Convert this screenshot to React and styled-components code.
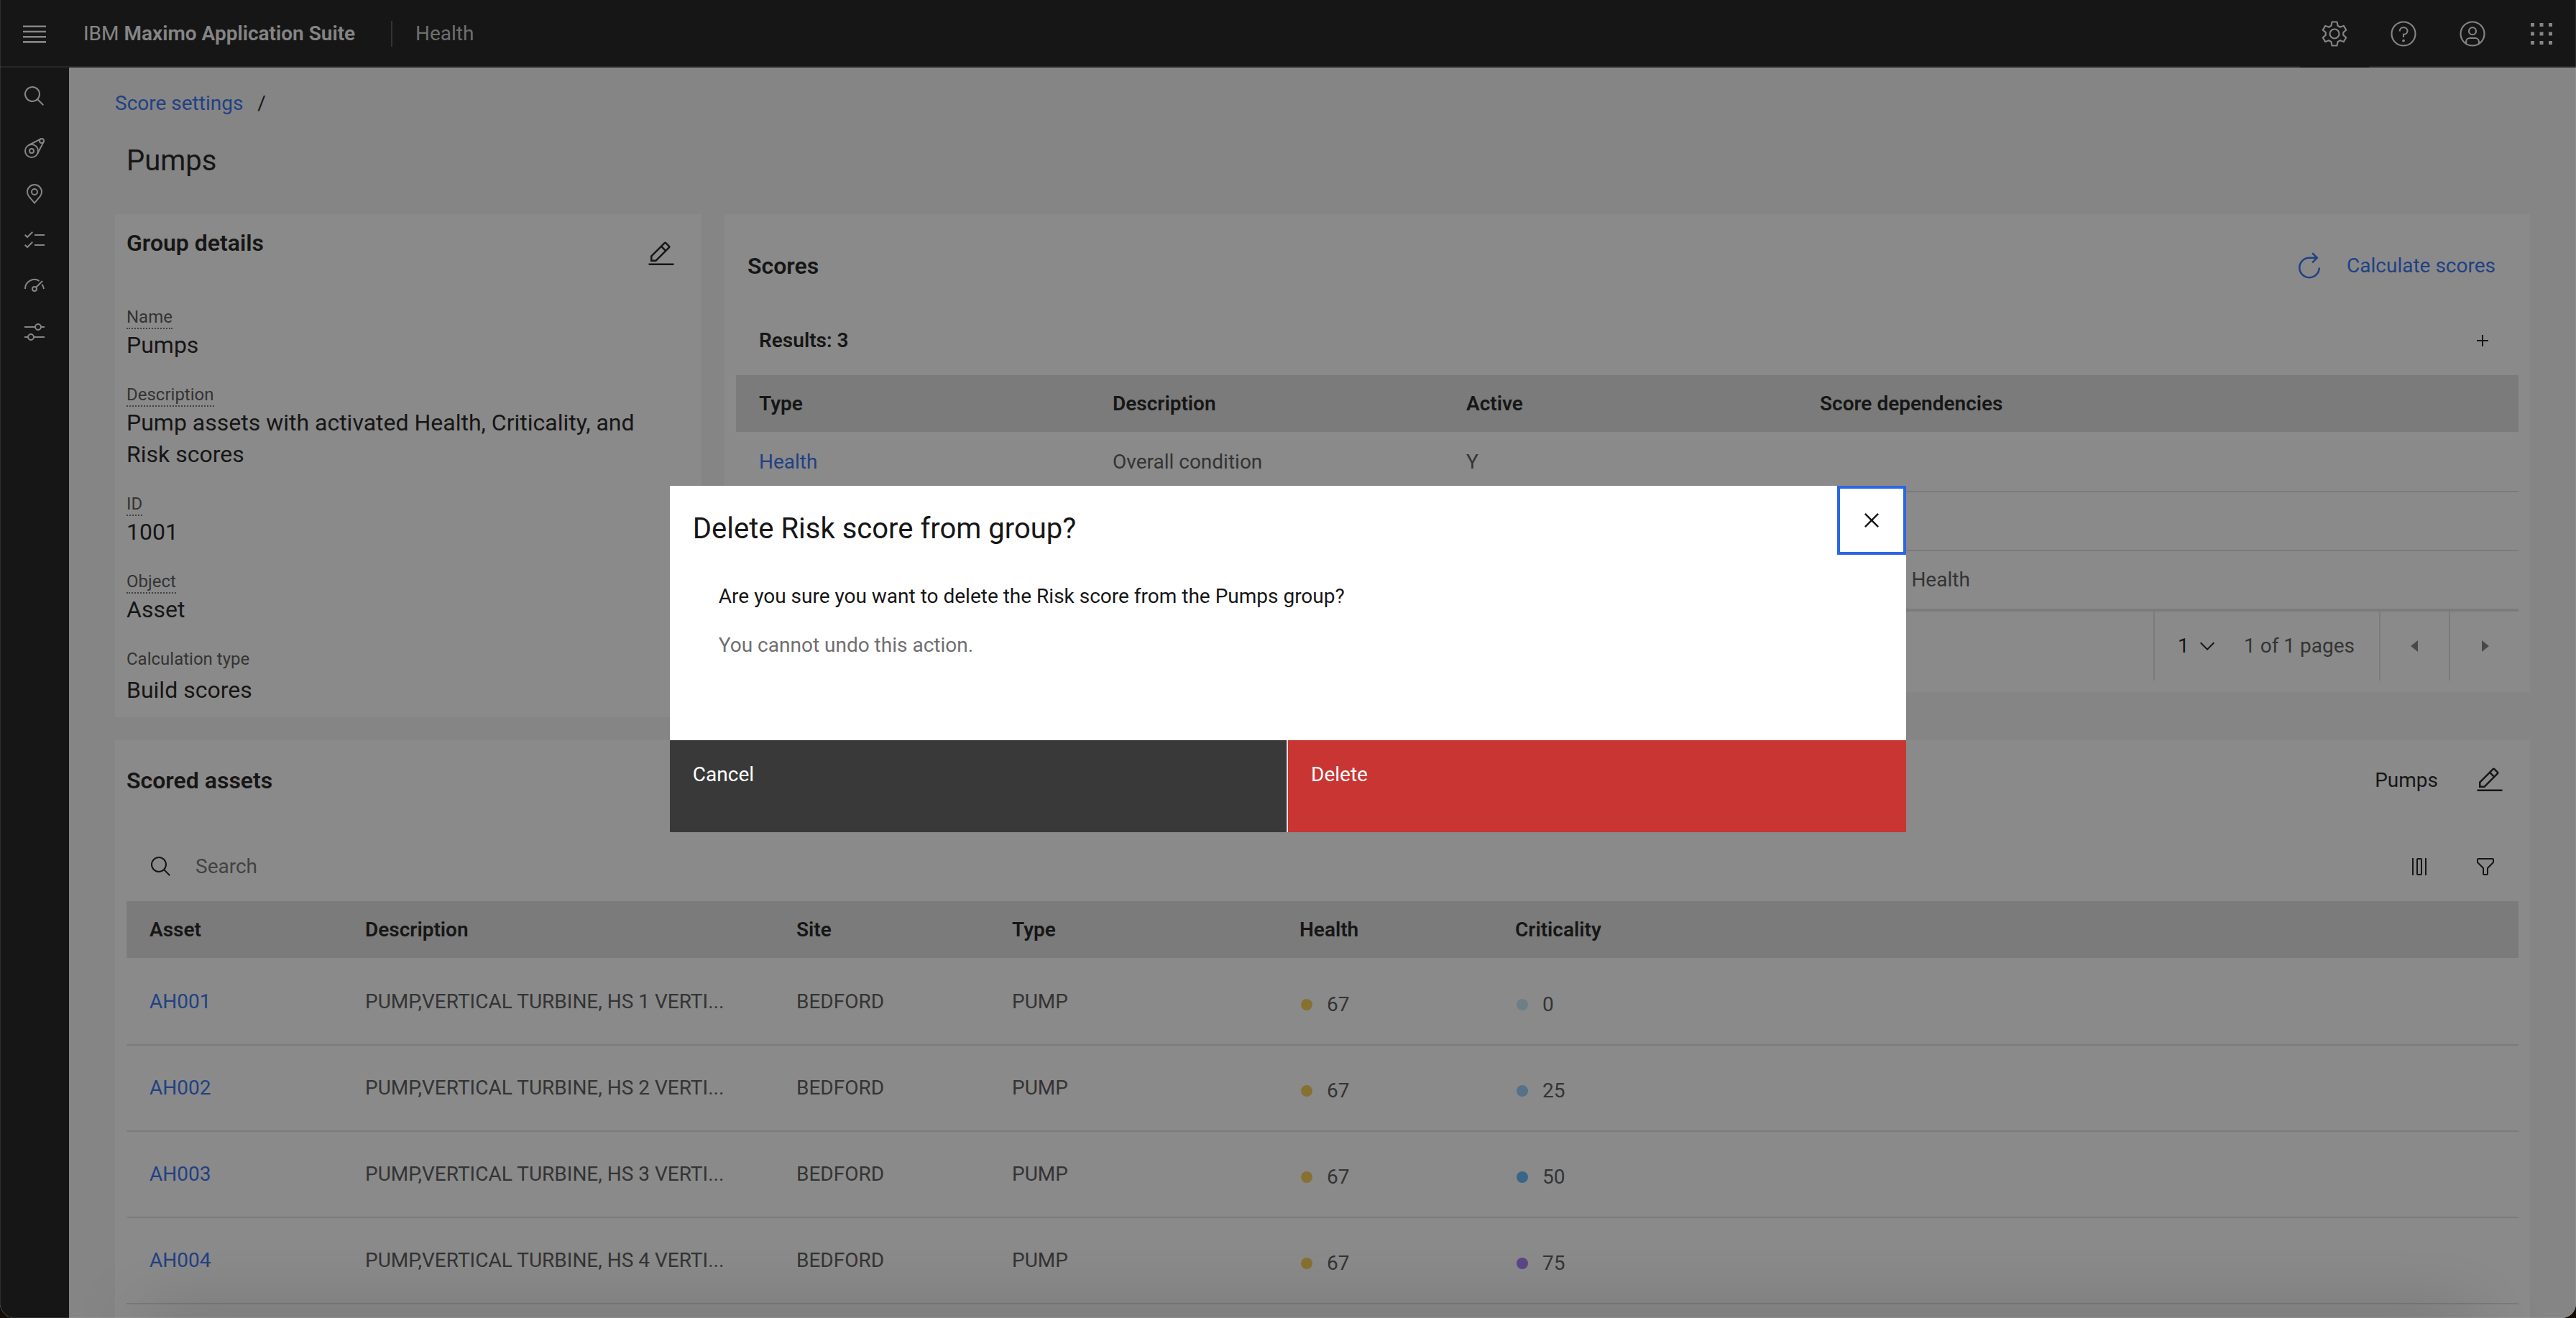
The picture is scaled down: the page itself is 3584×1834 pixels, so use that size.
import React from "react";
import styled, { createGlobalStyle, css } from "styled-components";

const color = {
  ink: "#161616",
  text: "#525252",
  muted: "#6f6f6f",
  link: "#2d6cf0",
  line: "#e0e0e0",
  page: "#f4f4f4",
  card: "#ffffff",
  focus: "#2d66e2",
  danger: "#c83532",
};

const GlobalStyle = createGlobalStyle`
  *, *::before, *::after { box-sizing: border-box; }
  body {
    margin: 0;
    background: #140c06;
    color: ${color.ink};
    font: 400 28px/40px Roboto, "Liberation Sans", sans-serif;
  }
  button, input, select { font: inherit; color: inherit; }
  h1, h2, p, dl, dd { margin: 0; }
`;

/* ---------- window and shell ---------- */

const Window = styled.div`
  position: relative;
  display: flex;
  flex-direction: column;
  height: 100vh;
  overflow: hidden;
  border-radius: 0 0 20px 20px;
  background: ${color.page};
`;

const WindowEdge = styled.div`
  position: absolute;
  inset: 0;
  z-index: 3;
  pointer-events: none;
  border: solid rgba(255, 255, 255, 0.1);
  border-width: 0 1px 1px;
  border-radius: 0 0 20px 20px;
`;

const BottomShade = styled.div`
  position: absolute;
  right: 140px;
  bottom: -40px;
  left: 200px;
  z-index: 1;
  height: 40px;
  pointer-events: none;
  box-shadow: 0 0 100px rgba(0, 0, 0, 0.3);
`;

const Bare = styled.button`
  display: flex;
  align-items: center;
  justify-content: center;
  flex: none;
  padding: 0;
  border: 0;
  background: none;
  cursor: pointer;
`;

const IconButton = styled(Bare)`
  width: ${(p) => p.$w || 96}px;
  height: ${(p) => p.$h || 96}px;
`;

const Header = styled.header`
  display: flex;
  align-items: center;
  flex: none;
  height: 94px;
  background: ${color.ink};
  color: ${color.page};
  box-shadow: inset 0 -2px #393939;
`;

const Brand = styled.a`
  min-width: 448px;
  padding-left: 20px;
  color: inherit;
  text-decoration: none;

  strong { font-weight: 600; }
`;

const AppName = styled.span`
  flex: 1;
  padding-left: 32px;
  border-left: 2px solid #525252;
  line-height: 36px;
  color: #c6c6c6;
`;

const HeaderAction = styled(Bare)`
  width: 96px;
  height: 94px;
  background: ${(p) => (p.$active ? color.ink : "none")};
`;

const Columns = styled.div`
  display: flex;
  flex: 1;
  min-height: 0;
`;

const SideNav = styled.nav`
  flex: none;
  width: 96px;
  padding-top: 8px;
  background: ${color.ink};
  color: ${color.page};
`;

const NavItem = styled.a`
  display: flex;
  align-items: center;
  justify-content: center;
  height: 64px;
  color: inherit;

  &:first-child { margin-bottom: 8px; }
`;

const Main = styled.main`
  flex: 1;
  min-width: 0;
  padding: 30px 64px 0;
  overflow: hidden;
`;

const Link = styled.a`
  color: ${color.link};
  text-decoration: none;
`;

const Breadcrumb = styled.nav`
  display: flex;
  gap: 20px;
`;

const PageTitle = styled.h1`
  margin: 32px 0 46px;
  padding-left: 16px;
  font-size: 40px;
  font-weight: 400;
  line-height: 56px;
`;

/* ---------- cards ---------- */

const Cards = styled.div`
  display: grid;
  grid-template-columns: repeat(4, minmax(0, 1fr));
  gap: 32px;
  align-items: start;
`;

const Card = styled.section`
  grid-column: span ${(p) => p.$span};
  min-height: ${(p) => p.$minHeight || 0}px;
  padding: 16px;
  background: ${color.card};
`;

const CardHead = styled.div`
  display: flex;
  align-items: ${(p) => p.$align || "center"};
  gap: 32px;
  height: ${(p) => p.$h || 80}px;
  margin-bottom: ${(p) => p.$gap || 0}px;
`;

const CardTitle = styled.h2`
  flex: 1;
  padding-left: ${(p) => p.$inset || 0}px;
  font-size: 32px;
  font-weight: 600;
  line-height: 48px;
`;

const Field = styled.div`
  margin-top: 32px;
`;

const Label = styled.dt`
  width: fit-content;
  border-bottom: 2px dotted ${(p) => (p.$plain ? "transparent" : color.muted)};
  margin-bottom: ${(p) => (p.$plain ? 4 : 0)}px;
  color: ${color.text};
  font-size: 24px;
  line-height: 30px;
`;

const Value = styled.dd`
  padding-right: 32px;
  font-size: 32px;
  line-height: 44px;
`;

const TextButton = styled(Bare)`
  gap: 32px;
  padding: 0 32px 0 0;
  height: 96px;
  color: ${color.link};
`;

const Toolbar = styled.div`
  display: flex;
  align-items: center;
  height: 96px;
  padding-left: 32px;
`;

const Results = styled.strong`
  flex: 1;
  font-weight: 600;
`;

const SearchLabel = styled.label`
  display: flex;
  align-items: center;
  flex: 1;
  gap: 32px;
`;

const SearchInput = styled.input`
  flex: 1;
  padding: 0;
  border: 0;
  outline: 0;
  background: none;

  &::placeholder { color: ${color.muted}; opacity: 1; }
`;

/* ---------- tables ---------- */

const Table = styled.table`
  width: 100%;
  table-layout: fixed;
  border-spacing: 0;
  text-align: left;

  th {
    height: 81px;
    padding: 0 32px;
    border-bottom: 2px solid ${color.card};
    background: ${color.line};
    font-weight: 600;
  }

  td {
    height: ${(p) => p.$row}px;
    padding: 0 32px;
    border-bottom: 2px solid ${color.line};
    color: ${color.text};
    white-space: nowrap;
  }
`;

const Col = styled.col`
  width: ${(p) => (p.$w ? `${p.$w}px` : "auto")};
`;

const Score = styled.span`
  display: flex;
  align-items: center;
  gap: 20px;
  padding: 8px 2px 0;
`;

const dotTone = {
  fair: "#f8cd4a",
  c0: "#c6e6f8",
  c25: "#92cefc",
  c50: "#5cb4fa",
  c75: "#a474f8",
};

const Dot = styled.i`
  width: 16px;
  height: 16px;
  border-radius: 50%;
  background: ${(p) => dotTone[p.$tone]};
`;

const Pagination = styled.div`
  display: flex;
  align-items: stretch;
  justify-content: flex-end;
  height: 98px;
  border-top: 2px solid ${color.line};
  color: ${color.text};
`;

const PageSelectWrap = styled.label`
  display: grid;
  align-items: center;
  width: 94px;
  border-left: 2px solid ${color.line};
  color: ${color.ink};

  > * { grid-area: 1 / 1; }
  > svg { justify-self: end; margin-right: 3px; pointer-events: none; }
`;

const PageSelect = styled.select`
  appearance: none;
  width: 100%;
  height: 96px;
  padding: 0 0 0 32px;
  border: 0;
  background: none;
`;

const PageCount = styled.span`
  align-self: center;
  min-width: 156px;
  margin: 0 32px;
`;

const PageStep = styled(Bare)`
  width: 97px;
  border-left: 2px solid ${color.line};
  color: #7d7d7d;
`;

/* ---------- dialog ---------- */

const Backdrop = styled.div`
  position: absolute;
  inset: 0;
  z-index: 2;
  display: flex;
  align-items: center;
  justify-content: center;
  background: rgba(22, 22, 22, 0.5);
`;

const Dialog = styled.div`
  width: 48%;
  background: ${color.card};
`;

const DialogHead = styled.div`
  display: flex;
  justify-content: space-between;
`;

const DialogTitle = styled.h2`
  padding: 32px 0 0 32px;
  font-size: 40px;
  font-weight: 400;
  line-height: 56px;
`;

const CloseButton = styled(IconButton)`
  border: 4px solid ${color.focus};
  outline: 0;
`;

const DialogBody = styled.div`
  padding: 38px 68px 112px;

  p + p { margin-top: 28px; color: ${color.muted}; }
`;

const DialogFooter = styled.div`
  display: grid;
  grid-template-columns: 1fr 1fr;
`;

const DialogButton = styled(Bare)`
  align-items: flex-start;
  justify-content: flex-start;
  height: 128px;
  padding: 28px 32px;
  color: #ffffff;
  ${(p) =>
    p.$danger
      ? css`background: ${color.danger};`
      : css`
          background: #393939;
          border-right: 2px solid ${color.line};
        `}
`;

/* ---------- icons, all on a 32 unit grid ---------- */

const glyphs = {
  menu: <path d="M0 4.5h32v2.6H0zM0 11.7h32v2.6H0zM0 18.9h32v2.6H0zM0 26.1h32v2.6H0z" />,
  search: <path d="M29,27.5859l-7.5521-7.5521a11.0177,11.0177,0,1,0-1.4141,1.4141L27.5859,29ZM4,13a9,9,0,1,1,9,9A9.01,9.01,0,0,1,4,13Z" />,
  pump: (
    <g fill="none" stroke="currentColor" strokeWidth="2">
      <circle cx="12" cy="20" r="9" />
      <circle cx="12" cy="20" r="3" />
      <circle cx="26" cy="6" r="3" />
      <path d="M7.9 12 24.6 3.3M20 24.1 28.7 7.4" />
    </g>
  ),
  pin: (
    <path d="M16,18a5,5,0,1,1,5-5A5.0057,5.0057,0,0,1,16,18Zm0-8a3,3,0,1,0,3,3A3.0033,3.0033,0,0,0,16,10ZM16,30,7.5645,20.0513c-.0479-.0571-.3482-.4515-.3482-.4515A10.8888,10.8888,0,0,1,5,13a11,11,0,0,1,22,0,10.8844,10.8844,0,0,1-2.2148,6.5973l-.0015.0025s-.3.3944-.3447.4474ZM8.8125,18.395c.001.0007.2334.3082.2866.3744L16,26.9079l6.91-8.15c.0439-.0552.2783-.3649.2788-.3657A8.901,8.901,0,0,0,25,13,9,9,0,1,0,7,13,8.9054,8.9054,0,0,0,8.8125,18.395Z" />
  ),
  tasks: <path d="M16 8h14v2H16zM16 22h14v2H16zM6 10.59 3.41 8 2 9.41l4 4 8-8L12.59 4zM6 24.59 3.41 22 2 23.41l4 4 8-8L12.59 18z" />,
  meter: (
    <g fill="none" stroke="currentColor" strokeWidth="2">
      <path d="M3 20a13 13 0 0 1 19.6-11.2M26.3 13.6A13 13 0 0 1 29 20M18.2 17.8 27 9" />
      <circle cx="16" cy="20" r="3" />
    </g>
  ),
  adjust: (
    <path d="M30,8h-4.1c-0.5-2.3-2.5-4-4.9-4s-4.4,1.7-4.9,4H2v2h14.1c0.5,2.3,2.5,4,4.9,4s4.4-1.7,4.9-4H30V8z M21,12c-1.7,0-3-1.3-3-3s1.3-3,3-3s3,1.3,3,3S22.7,12,21,12z M2,24h4.1c0.5,2.3,2.5,4,4.9,4s4.4-1.7,4.9-4H30v-2H15.9c-0.5-2.3-2.5-4-4.9-4s-4.4,1.7-4.9,4H2V24z M11,20c1.7,0,3,1.3,3,3s-1.3,3-3,3s-3-1.3-3-3S9.3,20,11,20z" />
  ),
  gear: (
    <g fill="none" stroke="currentColor" strokeWidth="1.7" strokeLinejoin="round">
      <path d="M13.2 2.8h5.6l.8 4.2 2.7 1.6 3.9-1.5 2.8 4.7-3.2 2.7v3l3.2 2.7-2.8 4.7-3.9-1.5-2.7 1.6-.8 4.2h-5.6l-.8-4.2-2.7-1.6-3.9 1.5L3 20.2l3.2-2.7v-3L3 11.8l2.8-4.7 3.9 1.5 2.7-1.6z" />
      <circle cx="16" cy="16" r="5.2" />
    </g>
  ),
  help: (
    <g fill="none" stroke="currentColor" strokeWidth="1.7">
      <circle cx="16" cy="16" r="13.2" />
      <path d="M11.8 13.2v-.4a3.8 3.8 0 0 1 3.8-3.8h1a3.8 3.8 0 0 1 0 7.6H16v3.2" />
      <circle cx="16" cy="23.6" r="1.5" fill="currentColor" stroke="none" />
    </g>
  ),
  user: (
    <g fill="none" stroke="currentColor" strokeWidth="1.7">
      <circle cx="16" cy="16" r="13.2" />
      <circle cx="16" cy="13" r="4" />
      <path d="M8.9 27v-2.2a4 4 0 0 1 4-4h6.2a4 4 0 0 1 4 4V27" />
    </g>
  ),
  apps: <path d="M4 4h4v4H4zM14 4h4v4h-4zM24 4h4v4h-4zM4 14h4v4H4zM14 14h4v4h-4zM24 14h4v4h-4zM4 24h4v4H4zM14 24h4v4h-4zM24 24h4v4h-4z" />,
  edit: (
    <path d="M2 26h28v2H2zM25.4,9c0.8-0.8,0.8-2,0-2.8l-3.6-3.6c-0.8-0.8-2-0.8-2.8,0l-15,15V24h6.4L25.4,9z M20.4,4L24,7.6l-3,3L17.4,7L20.4,4z M6,22v-3.6l10-10l3.6,3.6l-10,10H6z" />
  ),
  restart: <path d="M26,18A10,10,0,1,1,16,8h6.1821l-3.5844,3.5854L20,13l6-6L20,1,18.5977,2.414,22.1851,6H16A12,12,0,1,0,28,18Z" />,
  add: <path d="M17 15V8h-2v7H8v2h7v7h2v-7h7v-2z" />,
  close: <path d="M24 9.4L22.6 8 16 14.6 9.4 8 8 9.4 14.6 16 8 22.6 9.4 24 16 17.4 22.6 24 24 22.6 17.4 16z" />,
  chevron: <path d="M16 22 6 12l1.4-1.4 8.6 8.6 8.6-8.6L26 12z" />,
  previous: <path d="M20 24 10 16l10-8z" />,
  next: <path d="M12 8l10 8-10 8z" />,
  columns: <path d="M6 4h2v24H6zM24 4h2v24h-2zM18 6v20h-4V6h4m0-2h-4a2 2 0 0 0-2 2v20a2 2 0 0 0 2 2h4a2 2 0 0 0 2-2V6a2 2 0 0 0-2-2z" />,
  filter: <path d="M18,28H14a2,2,0,0,1-2-2V18.41L4.59,11A2,2,0,0,1,4,9.59V6A2,2,0,0,1,6,4H26a2,2,0,0,1,2,2V9.59A2,2,0,0,1,27.41,11L20,18.41V26A2,2,0,0,1,18,28ZM6,6V9.59l8,8V26h4V17.59l8-8V6Z" />,
};

function Icon({ name, size = 32 }) {
  return (
    <svg width={size} height={size} viewBox="0 0 32 32" fill="currentColor" aria-hidden="true">
      {glyphs[name]}
    </svg>
  );
}

/* ---------- data ---------- */

const navItems = [
  ["search", "Search"],
  ["pump", "Assets"],
  ["pin", "Locations"],
  ["tasks", "Work queues"],
  ["meter", "Scoring"],
  ["adjust", "Settings"],
];

const headerActions = [
  ["gear", "Settings"],
  ["help", "Help"],
  ["user", "Profile"],
  ["apps", "Applications"],
];

const details = [
  ["Name", "Pumps"],
  ["Description", "Pump assets with activated Health, Criticality, and Risk scores"],
  ["ID", "1001"],
  ["Object", "Asset"],
  ["Calculation type", "Build scores", true],
];

const scores = [
  { id: 1, type: "Health", description: "Overall condition", active: "Y" },
  { id: 2 },
  { id: 3, dependencies: "Criticality, Health" },
];

const assets = [
  ["AH001", "PUMP,VERTICAL TURBINE, HS 1 VERTI...", 67, 0],
  ["AH002", "PUMP,VERTICAL TURBINE, HS 2 VERTI...", 67, 25],
  ["AH003", "PUMP,VERTICAL TURBINE, HS 3 VERTI...", 67, 50],
  ["AH004", "PUMP,VERTICAL TURBINE, HS 4 VERTI...", 67, 75],
];

/* ---------- sections ---------- */

function GroupDetails() {
  return (
    <Card $span={1} $minHeight={700}>
      <CardHead $align="flex-start">
        <CardTitle>Group details</CardTitle>
        <IconButton $w={80} $h={80} aria-label="Edit group details">
          <Icon name="edit" size={40} />
        </IconButton>
      </CardHead>
      <dl>
        {details.map(([label, value, plain]) => (
          <Field key={label}>
            <Label $plain={plain}>{label}</Label>
            <Value>{value}</Value>
          </Field>
        ))}
      </dl>
    </Card>
  );
}

function Scores() {
  return (
    <Card $span={3}>
      <CardHead $h={112}>
        <CardTitle $inset={16}>Scores</CardTitle>
        <TextButton>
          <Icon name="restart" size={40} />
          Calculate scores
        </TextButton>
      </CardHead>
      <Toolbar>
        <Results>Results: 3</Results>
        <IconButton $w={100} aria-label="Add score">
          <Icon name="add" />
        </IconButton>
      </Toolbar>
      <Table $row={82}>
        <colgroup>
          <Col $w={492} />
          <Col $w={492} />
          <Col $w={492} />
          <Col />
        </colgroup>
        <thead>
          <tr>
            <th>Type</th>
            <th>Description</th>
            <th>Active</th>
            <th>Score dependencies</th>
          </tr>
        </thead>
        <tbody>
          {scores.map((score) => (
            <tr key={score.id}>
              <td>{score.type && <Link href="#">{score.type}</Link>}</td>
              <td>{score.description}</td>
              <td>{score.active}</td>
              <td>{score.dependencies}</td>
            </tr>
          ))}
        </tbody>
      </Table>
      <Pagination>
        <PageSelectWrap>
          <PageSelect aria-label="Page" defaultValue="1">
            <option>1</option>
          </PageSelect>
          <Icon name="chevron" />
        </PageSelectWrap>
        <PageCount>1 of 1 pages</PageCount>
        <PageStep aria-label="Previous page"><Icon name="previous" /></PageStep>
        <PageStep aria-label="Next page"><Icon name="next" /></PageStep>
      </Pagination>
    </Card>
  );
}

function ScoredAssets() {
  return (
    <Card $span={4} $minHeight={820}>
      <CardHead $gap={32}>
        <CardTitle>Scored assets</CardTitle>
        <span>Pumps</span>
        <IconButton $w={80} $h={80} aria-label="Edit scored assets">
          <Icon name="edit" size={40} />
        </IconButton>
      </CardHead>
      <Toolbar>
        <SearchLabel>
          <Icon name="search" />
          <SearchInput type="text" placeholder="Search" aria-label="Search" />
        </SearchLabel>
        <IconButton $w={92} aria-label="Columns"><Icon name="columns" /></IconButton>
        <IconButton $w={92} aria-label="Filter"><Icon name="filter" /></IconButton>
      </Toolbar>
      <Table $row={120}>
        <colgroup>
          <Col $w={300} />
          <Col $w={600} />
          <Col $w={300} />
          <Col $w={400} />
          <Col $w={300} />
          <Col />
        </colgroup>
        <thead>
          <tr>
            <th>Asset</th>
            <th>Description</th>
            <th>Site</th>
            <th>Type</th>
            <th>Health</th>
            <th>Criticality</th>
          </tr>
        </thead>
        <tbody>
          {assets.map(([id, description, health, criticality]) => (
            <tr key={id}>
              <td><Link href="#">{id}</Link></td>
              <td>{description}</td>
              <td>BEDFORD</td>
              <td>PUMP</td>
              <td><Score><Dot $tone="fair" />{health}</Score></td>
              <td><Score><Dot $tone={`c${criticality}`} />{criticality}</Score></td>
            </tr>
          ))}
        </tbody>
      </Table>
    </Card>
  );
}

function DeleteDialog() {
  return (
    <Backdrop>
      <Dialog role="dialog" aria-modal="true" aria-labelledby="dialog-title">
        <DialogHead>
          <DialogTitle id="dialog-title">Delete Risk score from group?</DialogTitle>
          <CloseButton aria-label="Close"><Icon name="close" size={40} /></CloseButton>
        </DialogHead>
        <DialogBody>
          <p>Are you sure you want to delete the Risk score from the Pumps group?</p>
          <p>You cannot undo this action.</p>
        </DialogBody>
        <DialogFooter>
          <DialogButton>Cancel</DialogButton>
          <DialogButton $danger>Delete</DialogButton>
        </DialogFooter>
      </Dialog>
    </Backdrop>
  );
}

export default function App() {
  return (
    <Window>
      <GlobalStyle />
      <Header>
        <HeaderAction aria-label="Menu"><Icon name="menu" /></HeaderAction>
        <Brand href="#">IBM <strong>Maximo Application Suite</strong></Brand>
        <AppName>Health</AppName>
        {headerActions.map(([icon, label]) => (
          <HeaderAction key={icon} $active={icon === "gear"} aria-label={label}>
            <Icon name={icon} size={40} />
          </HeaderAction>
        ))}
      </Header>
      <Columns>
        <SideNav>
          {navItems.map(([icon, label]) => (
            <NavItem key={icon} href="#" aria-label={label}>
              <Icon name={icon} />
            </NavItem>
          ))}
        </SideNav>
        <Main>
          <Breadcrumb>
            <Link href="#">Score settings</Link>
            <span>/</span>
          </Breadcrumb>
          <PageTitle>Pumps</PageTitle>
          <Cards>
            <GroupDetails />
            <Scores />
            <ScoredAssets />
          </Cards>
        </Main>
      </Columns>
      <BottomShade />
      <DeleteDialog />
      <WindowEdge />
    </Window>
  );
}
